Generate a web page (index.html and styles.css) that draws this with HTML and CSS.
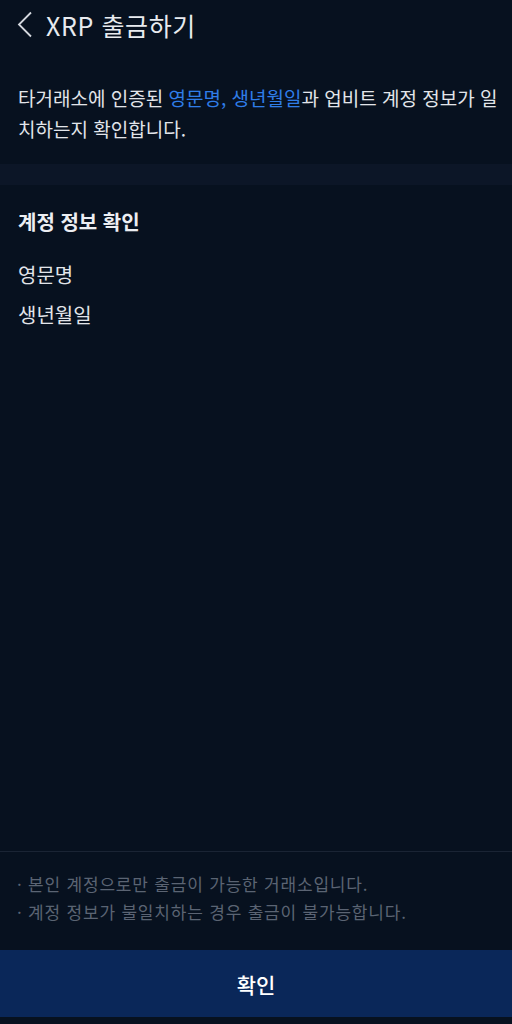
FILE: index.html
```html
<!DOCTYPE html>
<html lang="ko">
<head>
<meta charset="utf-8">
<link rel="stylesheet" href="styles.css">
</head>
<body>
<div class="page">
  <header class="header">
    <svg class="back" width="18" height="28" viewBox="0 0 18 28"><polyline points="15,1.5 3,13.5 15,25.5" fill="none" stroke="#d4d8de" stroke-width="1.8"/></svg>
    <h1 class="title">XRP 출금하기</h1>
  </header>
  <p class="desc">타거래소에 인증된 <span class="hl">영문명, 생년월일</span>과 업비트 계정 정보가 일치하는지 확인합니다.</p>
  <div class="band"></div>
  <section class="info">
    <h2 class="info-title">계정 정보 확인</h2>
    <div class="item">영문명</div>
    <div class="item">생년월일</div>
  </section>
  <div class="spacer"></div>
  <footer class="footer">
    <ul class="notes">
      <li>본인 계정으로만 출금이 가능한 거래소입니다.</li>
      <li>계정 정보가 불일치하는 경우 출금이 불가능합니다.</li>
    </ul>
    <button class="confirm">확인</button>
  </footer>
</div>
</body>
</html>
```
FILE: styles.css
```css
* { box-sizing: border-box; margin: 0; padding: 0; }
html, body { width: 512px; height: 1024px; background: #07111f; }
body { font-family: "Noto Sans CJK KR", "Noto Sans", sans-serif; color: #e6e9ee; }
.page { display: flex; flex-direction: column; height: 1024px; }
.header { display: flex; align-items: center; height: 50px; padding-left: 16px; }
.back { display: block; margin-right: 12px; }
.title { font-size: 25px; font-weight: 400; color: #e8ebef; letter-spacing: 0.6px; }
.desc { padding: 32px 6px 0 18px; font-size: 19px; line-height: 31px; height: 114px; letter-spacing: 0; color: #e2e5ea; word-break: break-all; }
.hl { color: #2f7de8; }
.band { height: 21px; background: #0c1627; }
.info { padding: 23px 18px 0 18px; }
.info-title { font-size: 20px; font-weight: 700; line-height: 28px; margin-bottom: 25px; color: #eceef2; }
.item { font-size: 20px; line-height: 28px; margin-bottom: 12px; color: #e2e5ea; }
.spacer { flex: 1; }
.footer { border-top: 1px solid #1a2434; padding-bottom: 7px; }
.notes { list-style: none; padding: 18px 10px 24px 17px; }
.notes li { font-size: 17px; line-height: 28px; color: #5b6473; letter-spacing: 0.8px; }
.notes li::before { content: "· "; }
.confirm { display: block; width: 100%; height: 67px; border: 0; background: #0a2759; color: #ffffff; font-family: "Noto Sans CJK KR", sans-serif; font-size: 21px; font-weight: 500; }
```
